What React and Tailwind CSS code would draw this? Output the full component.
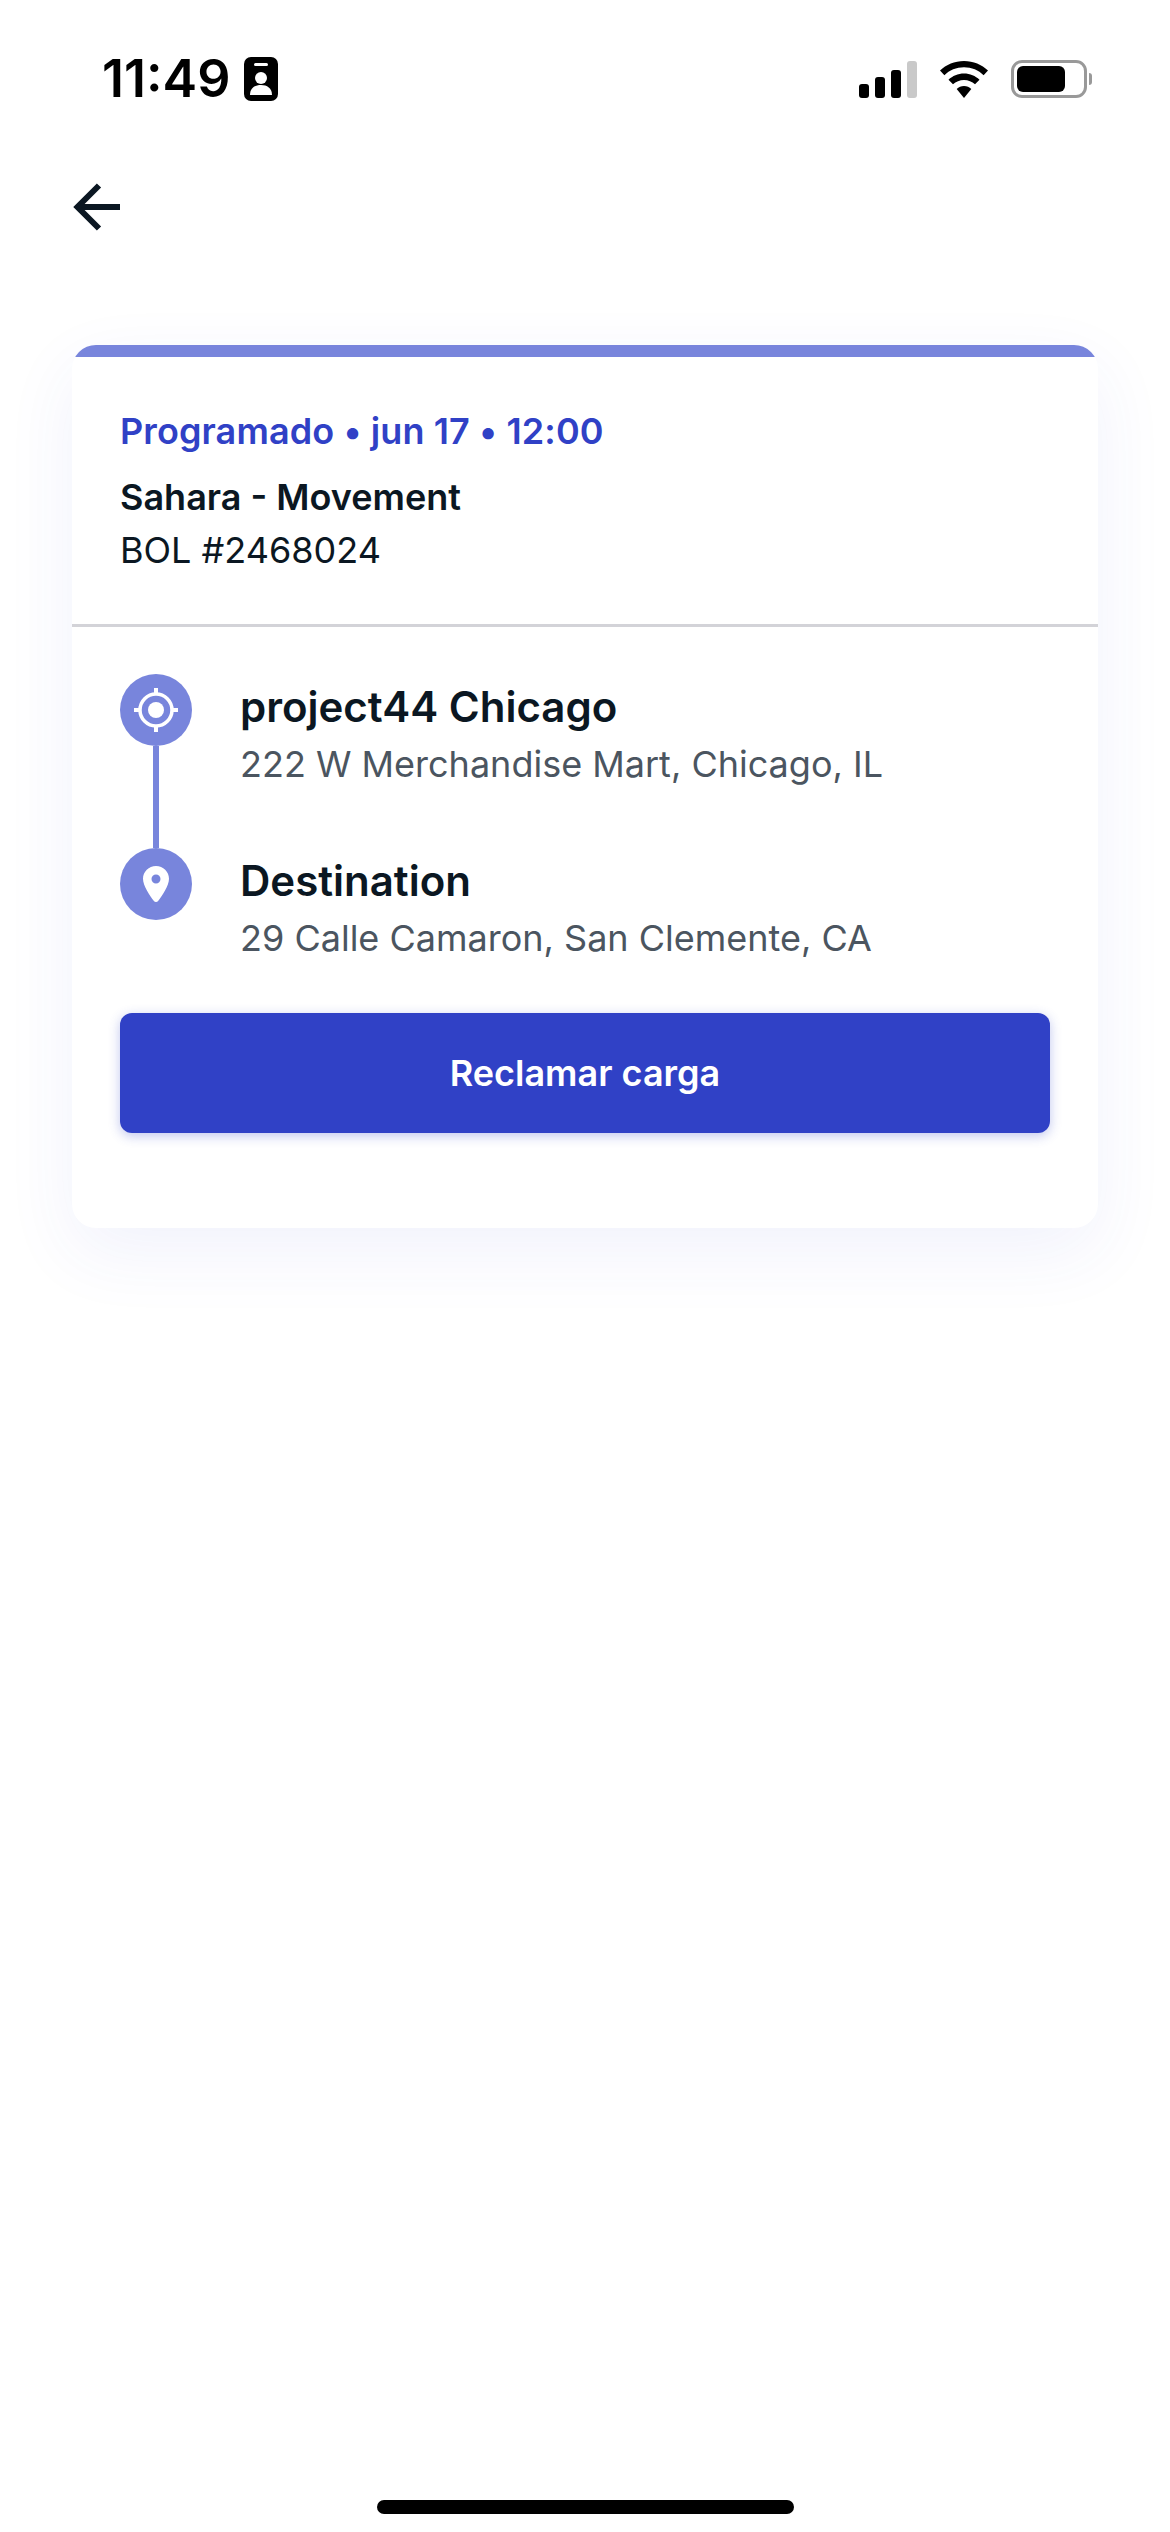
import React from "react";

// ─── Status bar glyphs ────────────────────────────────────────────────────────

const BadgeIcon = () => (
  <svg width="34" height="44" viewBox="0 0 34 44" className="block">
    <rect width="34" height="44" rx="7" fill="#000" />
    <rect x="10" y="6" width="14" height="3" rx="1.5" fill="#fff" />
    <circle cx="17" cy="21" r="6" fill="#fff" />
    <path d="M6 38c0-7 5-10 11-10s11 3 11 10z" fill="#fff" />
  </svg>
);

const SignalIcon = () => (
  <div className="flex items-end gap-[6px]">
    <div className="w-[10px] h-[14px] rounded-[3px] bg-black" />
    <div className="w-[10px] h-[21px] rounded-[3px] bg-black" />
    <div className="w-[10px] h-[28px] rounded-[3px] bg-black" />
    <div className="w-[10px] h-[37px] rounded-[3px] bg-[#c9c9c9]" />
  </div>
);

const WifiIcon = () => (
  <svg width="50" height="37" viewBox="0 0 50 37" className="block">
    <path d="M25 0C15.6 0 7.2 3.6 1 9.6l4.4 4.6C10.4 9.2 17.4 6.3 25 6.3s14.6 2.9 19.6 7.9L49 9.6C42.8 3.6 34.400 0 25 0z" fill="#000" />
    <path d="M25 12.500c-6 0-11.500 2.400-15.500 6.200l4.500 4.600c2.900-2.700 6.800-4.400 11-4.400s8.100 1.700 11 4.400l4.500-4.600c-4-3.800-9.500-6.200-15.500-6.200z" fill="#000" />
    <path d="M25 25c-2.800 0-5.400 1.100-7.300 2.900L25 37l7.300-9.100C30.400 26.100 27.800 25 25 25z" fill="#000" />
  </svg>
);

const BatteryIcon = () => (
  <div className="flex items-center gap-[2px]">
    <div className="w-[76px] h-[38px] rounded-[11px] border-[3px] border-[#999] p-[3px]">
      <div className="w-[48px] h-full rounded-[6px] bg-black" />
    </div>
    <div className="w-[3px] h-[12px] rounded-r-full bg-[#999]" />
  </div>
);

// Square-ended arrow, lucide's ArrowLeft has round caps
const BackArrow = () => (
  <svg width="48" height="48" viewBox="0 0 48 48" fill="none" stroke="#0b1722" strokeWidth="6" className="block">
    <path d="M47 24H5" />
    <path d="M26 2.500L4.500 24 26 45.500" />
  </svg>
);

// ─── Route icons ──────────────────────────────────────────────────────────────

const TargetIcon = () => (
  <svg width="44" height="44" viewBox="0 0 44 44" fill="none" stroke="#fff">
    <circle cx="22" cy="22" r="16" strokeWidth="3.500" />
    <circle cx="22" cy="22" r="8" fill="#fff" stroke="none" />
    <path d="M22 0v7M22 37v7M0 22h7M37 22h7" strokeWidth="4" />
  </svg>
);

const PinIcon = () => (
  <svg width="26" height="36" viewBox="0 0 26 36">
    <path
      fillRule="evenodd"
      fill="#fff"
      d="M13 0C5.800 0 0 5.700 0 12.800 0 20 7 29.800 10.700 34.800c1.200 1.600 3.400 1.600 4.600 0C19 29.800 26 20 26 12.800 26 5.700 20.200 0 13 0zm0 8.500a4.500 4.500 0 1 1 0 9 4.500 4.500 0 0 1 0-9z"
    />
  </svg>
);

const StopRow = ({ icon, title, address, line }) => (
  <div className="flex gap-[48px]">
    <div className="flex flex-col items-center w-[72px] shrink-0">
      <div className="w-[72px] h-[72px] rounded-full bg-[#7885dc] flex items-center justify-center shrink-0">
        {icon}
      </div>
      {line && <div className="w-[6px] flex-1 bg-[#7885dc]" />}
    </div>
    <div className={line ? "pt-[5px] pb-[55px]" : "pt-[5px]"}>
      <div className="text-[42px] leading-[56px] font-semibold text-[#0b1722]">{title}</div>
      <div className="text-[36px] leading-[58px] text-[#4b5560]">{address}</div>
    </div>
  </div>
);

// ─── Main Page ────────────────────────────────────────────────────────────────

const App = () => {
  return (
    <div
      className="w-[1170px] h-[2532px] bg-white flex flex-col overflow-hidden"
      style={{ fontFamily: "Inter, 'Liberation Sans', sans-serif" }}
    >
      {/* Status bar */}
      <div className="flex items-center justify-between pl-[102px] pr-[78px] pt-[50px] h-[108px] shrink-0">
        <div className="flex items-center gap-[14px]">
          <span className="text-[52px] leading-[58px] font-semibold text-black">11:49</span>
          <BadgeIcon />
        </div>
        <div className="flex items-center gap-[22px]">
          <SignalIcon />
          <WifiIcon />
          <BatteryIcon />
        </div>
      </div>

      {/* Back arrow */}
      <div className="pl-[73px] pt-[75px] h-[237px] shrink-0">
        <BackArrow />
      </div>

      {/* Card */}
      <div className="mx-[72px] h-[883px] bg-white rounded-[24px] overflow-hidden shrink-0 shadow-[0_24px_72px_rgba(60,70,210,0.07)]">
        <div className="h-[12px] bg-[#7885dc]" />
        <div className="px-[48px] pt-[50px] h-[270px] border-b-[3px] border-[#d3d3d8]">
          <div className="text-[36px] leading-[48px] font-semibold tracking-[0.1px] text-[#3041c6]">
            Programado • jun 17 • 12:00
          </div>
          <div className="text-[36px] leading-[53px] mt-[16px] font-semibold text-[#0b1722]">
            Sahara - Movement
          </div>
          <div className="text-[36px] leading-[53px] text-[#0b1722]">BOL #2468024</div>
        </div>

        <div className="px-[48px] pt-[47px]">
          <StopRow icon={<TargetIcon />} title="project44 Chicago" address="222 W Merchandise Mart, Chicago, IL" line />
          <StopRow icon={<PinIcon />} title="Destination" address="29 Calle Camaron, San Clemente, CA" />
          <button className="mt-[46px] w-full h-[120px] rounded-[12px] bg-[#3041c6] text-white text-[36px] font-semibold shadow-[0_3px_12px_rgba(48,65,198,0.3)]">
            Reclamar carga
          </button>
        </div>
      </div>

      {/* Home indicator */}
      <div className="mt-auto pb-[18px] flex justify-center">
        <div className="w-[417px] h-[14px] rounded-full bg-black" />
      </div>
    </div>
  );
};

export default App;
